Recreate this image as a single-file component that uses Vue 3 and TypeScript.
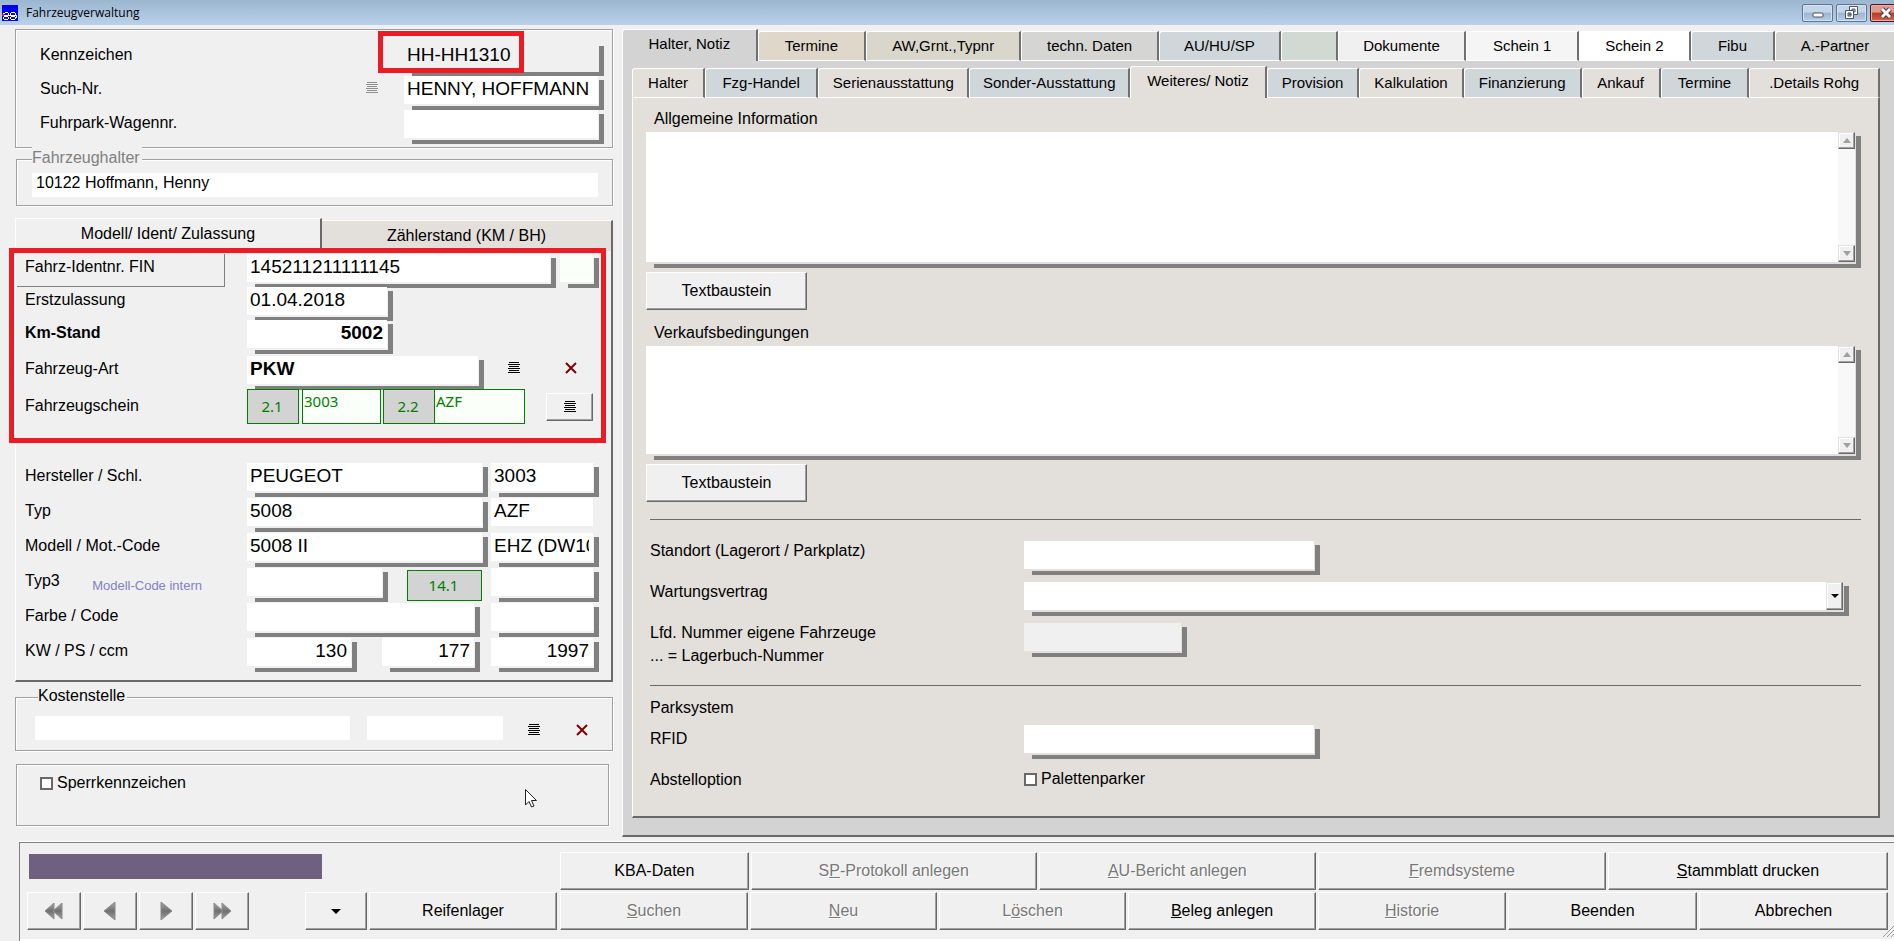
<script setup lang="ts">
import { reactive } from 'vue'

interface Tab {
  label: string
  span: number
  tone: string
  active?: boolean
}

interface Action {
  before?: string
  key?: string
  after: string
  span: number
  disabled?: boolean
}

const mainTabs: Tab[] = [
  { label: 'Halter, Notiz', span: 136, tone: 'grey', active: true },
  { label: 'Termine', span: 108, tone: 'tan' },
  { label: 'AW,Grnt.,Typnr', span: 156, tone: 'olive' },
  { label: 'techn. Daten', span: 138, tone: 'stone' },
  { label: 'AU/HU/SP', span: 122, tone: 'blue' },
  { label: '', span: 55, tone: 'green' },
  { label: 'Dokumente', span: 129, tone: 'light' },
  { label: 'Schein 1', span: 112, tone: 'pale' },
  { label: 'Schein 2', span: 112, tone: 'white' },
  { label: 'Fibu', span: 83, tone: 'blue' },
  { label: 'A.-Partner', span: 121, tone: 'stone' },
]

const subTabs: Tab[] = [
  { label: 'Halter', span: 72, tone: 'sand' },
  { label: 'Fzg-Handel', span: 113, tone: 'blue' },
  { label: 'Serienausstattung', span: 152, tone: 'sand' },
  { label: 'Sonder-Ausstattung', span: 162, tone: 'blue' },
  { label: 'Weiteres/ Notiz', span: 137, tone: 'sand', active: true },
  { label: 'Provision', span: 92, tone: 'blue' },
  { label: 'Kalkulation', span: 104, tone: 'sand' },
  { label: 'Finanzierung', span: 118, tone: 'blue' },
  { label: 'Ankauf', span: 78, tone: 'sand' },
  { label: 'Termine', span: 88, tone: 'blue' },
  { label: '.Details Rohg', span: 131, tone: 'sand' },
]

const topActions: Action[] = [
  { after: 'KBA-Daten', span: 188 },
  { before: 'S', key: 'P', after: '-Protokoll anlegen', span: 286, disabled: true },
  { key: 'A', after: 'U-Bericht anlegen', span: 277, disabled: true },
  { key: 'F', after: 'remdsysteme', span: 288, disabled: true },
  { key: 'S', after: 'tammblatt drucken', span: 280 },
]

const bottomActions: Action[] = [
  { key: 'S', after: 'uchen', span: 188, disabled: true },
  { key: 'N', after: 'eu', span: 187, disabled: true },
  { before: 'L', key: 'ö', after: 'schen', span: 187, disabled: true },
  { key: 'B', after: 'eleg anlegen', span: 188 },
  { key: 'H', after: 'istorie', span: 188, disabled: true },
  { after: 'Beenden', span: 189 },
  { after: 'Abbrechen', span: 189 },
]

const nav = [
  { name: 'Erster Datensatz', shape: 'M9 2 L9 18 L0 10Z M17 2 L17 18 L8 10Z' },
  { name: 'Voriger Datensatz', shape: 'M14 1 L14 19 L3 10Z' },
  { name: 'Nächster Datensatz', shape: 'M4 1 L4 19 L15 10Z' },
  { name: 'Letzter Datensatz', shape: 'M1 2 L1 18 L10 10Z M9 2 L9 18 L18 10Z' },
]

const car = reactive({
  kennzeichen: 'HH-HH1310',
  suchNr: 'HENNY, HOFFMANN',
  wagenNr: '',
  halter: '10122 Hoffmann, Henny',
  fin: '145211211111145',
  finZusatz: '',
  erstzulassung: '01.04.2018',
  km: '5002',
  art: 'PKW',
  feld21: '3003',
  feld22: 'AZF',
  hersteller: 'PEUGEOT',
  herstellerSchl: '3003',
  typ: '5008',
  typSchl: 'AZF',
  modell: '5008 II',
  motCode: 'EHZ (DW10',
  typ3: '',
  typ3Code: '',
  farbe: '',
  farbCode: '',
  kw: '130',
  ps: '177',
  ccm: '1997',
  kosten: '',
  kostenText: '',
  gesperrt: false,
  info: '',
  bedingungen: '',
  standort: '',
  wartung: '',
  lfdNummer: '',
  rfid: '',
  palette: false,
})
</script>

<template>
  <div class="window">
    <header class="titlebar">
      <svg class="app-icon" viewBox="0 0 16 16" width="16" height="16" shape-rendering="crispEdges" aria-hidden="true">
        <rect width="16" height="16" fill="#0000f8" />
        <path d="M3 7h3v1H3zM6 8h1v2H6zM1 8h2v1H1zM9 7h4v1H9zM13 8h1v2h-1zM8 8h1v2H8zM2 10h13v1H2zM14 11h1v2h-1z" fill="#fff" />
        <path d="M2 11h4v1H2zM1 12h1v2H1zM6 12h1v2H6zM2 14h4v1H2zM9 11h4v1H9zM8 12h1v2H8zM13 12h1v2h-1zM9 14h4v1H9z" fill="#fff" />
        <path d="M2 12h4v2H2zM9 12h4v2H9z" fill="#223" />
        <path d="M0 9h2v2H0z" fill="#f01818" />
      </svg>
      <span class="title">Fahrzeugverwaltung</span>
      <div class="win-buttons">
        <button class="win-btn" type="button" aria-label="Minimieren">
          <svg viewBox="0 0 12 12" width="12" height="12"><rect x="1" y="6" width="10" height="4" rx="1" fill="#fff" stroke="#49566b" /></svg>
        </button>
        <button class="win-btn" type="button" aria-label="Wiederherstellen">
          <svg viewBox="0 0 13 13" width="13" height="13">
            <path d="M4.500 .5h8v8h-8z M7 3h3v3h-3z" fill="#fff" fill-rule="evenodd" stroke="#49566b" />
            <path d="M.5 4.500h8v8h-8z M3 7h3v3h-3z" fill="#fff" fill-rule="evenodd" stroke="#49566b" />
          </svg>
        </button>
        <button class="win-btn close" type="button" aria-label="Schließen">
          <svg viewBox="0 0 12 12" width="12" height="12">
            <path d="M2 2 L10 10 M10 2 L2 10" stroke="#4b3a48" stroke-width="5" />
            <path d="M2 2 L10 10 M10 2 L2 10" stroke="#fff" stroke-width="3" />
          </svg>
        </button>
      </div>
    </header>

    <main class="main">
      <section class="left">
        <div class="box head-box">
          <div class="row">
            <label for="kennz">Kennzeichen</label>
            <span class="field plain w-head"><input id="kennz" v-model="car.kennzeichen" type="text" /></span>
          </div>
          <div class="row">
            <label for="such">Such-Nr.</label>
            <button class="flat dim" type="button" aria-label="Suchliste">
              <svg viewBox="0 0 12 12" width="12" height="12" shape-rendering="crispEdges"><path d="M1 0h10v1H1zM0 2h12v1H0zM1 4h10v1H1zM0 6h12v1H0zM1 8h10v1H1zM0 10h12v1H0z" fill="currentColor" /></svg>
            </button>
            <span class="field w-head"><input id="such" v-model="car.suchNr" type="text" /></span>
          </div>
          <div class="row">
            <label for="wagen">Fuhrpark-Wagennr.</label>
            <span class="field w-head"><input id="wagen" v-model="car.wagenNr" type="text" /></span>
          </div>
          <div class="mark mark-plate"></div>
        </div>

        <fieldset class="box holder">
          <legend>Fahrzeughalter</legend>
          <input v-model="car.halter" class="bare" type="text" aria-label="Fahrzeughalter" />
        </fieldset>

        <div class="model">
          <div class="model-tabs" role="tablist">
            <button class="model-tab current" type="button" role="tab" aria-selected="true">Modell/ Ident/ Zulassung</button>
            <button class="model-tab" type="button" role="tab" aria-selected="false">Zählerstand (KM / BH)</button>
          </div>
          <div class="model-panel">
            <div class="row short">
              <label class="boxed" for="fin">Fahrz-Identnr. FIN</label>
              <span class="field w-fin"><input id="fin" v-model="car.fin" type="text" /></span>
              <span class="field mint w-tiny last"><input v-model="car.finZusatz" type="text" aria-label="FIN Prüfziffer" /></span>
            </div>
            <div class="row short">
              <label for="erst">Erstzulassung</label>
              <span class="field w-date"><input id="erst" v-model="car.erstzulassung" type="text" /></span>
            </div>
            <div class="row tall">
              <label class="strong" for="km">Km-Stand</label>
              <span class="field w-date strong num"><input id="km" v-model="car.km" type="text" /></span>
            </div>
            <div class="row short">
              <label for="art">Fahrzeug-Art</label>
              <span class="field w-art strong"><input id="art" v-model="car.art" type="text" /></span>
              <div class="tools">
                <button class="flat" type="button" aria-label="Auswahlliste">
                  <svg viewBox="0 0 12 12" width="12" height="12" shape-rendering="crispEdges"><path d="M1 0h10v1H1zM0 2h12v1H0zM1 4h10v1H1zM0 6h12v1H0zM1 8h10v1H1zM0 10h12v1H0z" fill="currentColor" /></svg>
                </button>
                <button class="flat wine" type="button" aria-label="Löschen">
                  <svg viewBox="0 0 12 12" width="12" height="12"><path d="M1 1 L11 11 M11 1 L1 11" stroke="currentColor" stroke-width="2" fill="none" /></svg>
                </button>
              </div>
            </div>
            <div class="row schein">
              <label for="f21">Fahrzeugschein</label>
              <div class="codes">
                <span class="code">2.1</span>
                <input id="f21" v-model="car.feld21" class="code-in" type="text" />
                <span class="code joined">2.2</span>
                <input v-model="car.feld22" class="code-in wide" type="text" aria-label="Feld 2.2" />
              </div>
              <button class="raised list-btn last" type="button" aria-label="Fahrzeugschein-Liste">
                <svg viewBox="0 0 12 12" width="12" height="12" shape-rendering="crispEdges"><path d="M1 0h10v1H1zM0 2h12v1H0zM1 4h10v1H1zM0 6h12v1H0zM1 8h10v1H1zM0 10h12v1H0z" fill="currentColor" /></svg>
              </button>
            </div>
            <div class="mark mark-ident"></div>

            <div class="lower">
              <div class="row">
                <label for="herst">Hersteller / Schl.</label>
                <span class="field w-wide"><input id="herst" v-model="car.hersteller" type="text" /></span>
                <span class="field w-code last"><input v-model="car.herstellerSchl" type="text" aria-label="Herstellerschlüssel" /></span>
              </div>
              <div class="row">
                <label for="typ">Typ</label>
                <span class="field w-wide"><input id="typ" v-model="car.typ" type="text" /></span>
                <span class="field shadowless w-code last"><input v-model="car.typSchl" type="text" aria-label="Typschlüssel" /></span>
              </div>
              <div class="row">
                <label for="modell">Modell / Mot.-Code</label>
                <span class="field w-wide"><input id="modell" v-model="car.modell" type="text" /></span>
                <span class="field w-code last"><input v-model="car.motCode" type="text" aria-label="Motorcode" /></span>
              </div>
              <div class="row">
                <label for="typ3">Typ3 <small>Modell-Code intern</small></label>
                <span class="field w-typ3"><input id="typ3" v-model="car.typ3" type="text" /></span>
                <span class="code solo">14.1</span>
                <span class="field w-code last"><input v-model="car.typ3Code" type="text" aria-label="Typ3-Code" /></span>
              </div>
              <div class="row">
                <label for="farbe">Farbe / Code</label>
                <span class="field w-farbe"><input id="farbe" v-model="car.farbe" type="text" /></span>
                <span class="field w-code last"><input v-model="car.farbCode" type="text" aria-label="Farbcode" /></span>
              </div>
              <div class="row">
                <label for="kw">KW / PS / ccm</label>
                <span class="field num w-kw"><input id="kw" v-model="car.kw" type="text" /></span>
                <span class="field num w-ps last"><input v-model="car.ps" type="text" aria-label="PS" /></span>
                <span class="field num w-code after-ps"><input v-model="car.ccm" type="text" aria-label="ccm" /></span>
              </div>
            </div>
          </div>
        </div>

        <fieldset class="box cost">
          <legend>Kostenstelle</legend>
          <input v-model="car.kosten" class="bare cost-a" type="text" aria-label="Kostenstelle" />
          <input v-model="car.kostenText" class="bare cost-b" type="text" aria-label="Kostenstelle Text" />
          <div class="tools">
            <button class="flat" type="button" aria-label="Kostenstellenliste">
              <svg viewBox="0 0 12 12" width="12" height="12" shape-rendering="crispEdges"><path d="M1 0h10v1H1zM0 2h12v1H0zM1 4h10v1H1zM0 6h12v1H0zM1 8h10v1H1zM0 10h12v1H0z" fill="currentColor" /></svg>
            </button>
            <button class="flat wine" type="button" aria-label="Kostenstelle löschen">
              <svg viewBox="0 0 12 12" width="12" height="12"><path d="M1 1 L11 11 M11 1 L1 11" stroke="currentColor" stroke-width="2" fill="none" /></svg>
            </button>
          </div>
        </fieldset>

        <div class="box lock">
          <label class="check"><input v-model="car.gesperrt" type="checkbox" />Sperrkennzeichen</label>
          <svg class="pointer" viewBox="0 0 12 19" width="12" height="19" aria-hidden="true">
            <path d="M.5 .5V16L4 12.500L6.500 18L9 17L6.500 11.500H11.500Z" fill="#fff" stroke="#222" />
          </svg>
        </div>
      </section>

      <section class="right">
        <div class="tabs main-tabs" role="tablist">
          <button
            v-for="(t, i) in mainTabs"
            :key="i"
            class="tab"
            :class="[t.tone, { active: t.active }]"
            :style="{ flexGrow: t.span }"
            type="button"
            role="tab"
            :aria-selected="!!t.active"
          >{{ t.label }}</button>
        </div>
        <div class="outer-panel">
          <div class="tabs" role="tablist">
            <button
              v-for="(t, i) in subTabs"
              :key="i"
              class="tab"
              :class="[t.tone, { active: t.active }]"
              :style="{ flexGrow: t.span }"
              type="button"
              role="tab"
              :aria-selected="!!t.active"
            >{{ t.label }}</button>
          </div>
          <div class="inner-panel">
            <label class="area-label" for="info">Allgemeine Information</label>
            <div class="field area">
              <textarea id="info" v-model="car.info" class="tall-area"></textarea>
              <div class="scroll">
                <button type="button" aria-label="Nach oben"><svg viewBox="0 0 8 5" width="8" height="5"><path d="M0 5L4 0L8 5Z" fill="#a0a0a0" /></svg></button>
                <button type="button" aria-label="Nach unten"><svg viewBox="0 0 8 5" width="8" height="5"><path d="M0 0L4 5L8 0Z" fill="#a0a0a0" /></svg></button>
              </div>
            </div>
            <button class="raised text-btn" type="button">Textbaustein</button>
            <label class="area-label" for="beding">Verkaufsbedingungen</label>
            <div class="field area">
              <textarea id="beding" v-model="car.bedingungen" class="short-area"></textarea>
              <div class="scroll">
                <button type="button" aria-label="Nach oben"><svg viewBox="0 0 8 5" width="8" height="5"><path d="M0 5L4 0L8 5Z" fill="#a0a0a0" /></svg></button>
                <button type="button" aria-label="Nach unten"><svg viewBox="0 0 8 5" width="8" height="5"><path d="M0 0L4 5L8 0Z" fill="#a0a0a0" /></svg></button>
              </div>
            </div>
            <button class="raised text-btn" type="button">Textbaustein</button>
            <div class="group">
              <div class="line">
                <label for="standort">Standort (Lagerort / Parkplatz)</label>
                <span class="field w-std"><input id="standort" v-model="car.standort" type="text" /></span>
              </div>
              <div class="line">
                <label for="wartung">Wartungsvertrag</label>
                <span class="field pick">
                  <select id="wartung" v-model="car.wartung"><option value=""></option></select>
                  <span class="drop"><svg viewBox="0 0 8 4" width="8" height="4"><path d="M0 0H8L4 4Z" /></svg></span>
                </span>
              </div>
              <div class="line">
                <label for="lfd">Lfd. Nummer eigene Fahrzeuge<br />... = Lagerbuch-Nummer</label>
                <span class="field plain w-lfd"><input id="lfd" v-model="car.lfdNummer" type="text" /></span>
              </div>
            </div>
            <div class="group park">
              <div class="line-head">Parksystem</div>
              <div class="line">
                <label for="rfid">RFID</label>
                <span class="field w-std"><input id="rfid" v-model="car.rfid" type="text" /></span>
              </div>
              <div class="line">
                <span class="caption">Abstelloption</span>
                <label class="check"><input v-model="car.palette" type="checkbox" />Palettenparker</label>
              </div>
            </div>
          </div>
        </div>
      </section>
    </main>

    <footer class="footer">
      <div class="foot-left">
        <div class="status"></div>
        <div class="foot-row">
          <button v-for="n in nav" :key="n.name" class="raised nav-btn" type="button" :aria-label="n.name">
            <svg viewBox="0 0 18 20" width="18" height="20">
              <defs><linearGradient id="metal" x1="0" y1="0" x2="0" y2="1"><stop offset="0" stop-color="#a8a8a8" /><stop offset="0.5" stop-color="#707070" /><stop offset="1" stop-color="#a0a0a0" /></linearGradient></defs>
              <path :d="n.shape" fill="url(#metal)" stroke="#8a8a8a" stroke-width="1" />
            </svg>
          </button>
          <button class="raised drop-btn" type="button" aria-label="Auswahl">
            <svg viewBox="0 0 10 5" width="10" height="5"><path d="M0 0H10L5 5Z" /></svg>
          </button>
          <button class="raised store-btn" type="button">Reifenlager</button>
        </div>
      </div>
      <div class="foot-right">
        <div class="foot-row">
          <button
            v-for="a in topActions"
            :key="a.after"
            class="raised action"
            :style="{ flexGrow: a.span }"
            :disabled="a.disabled"
            type="button"
          >{{ a.before }}<u v-if="a.key">{{ a.key }}</u>{{ a.after }}</button>
        </div>
        <div class="foot-row">
          <button
            v-for="a in bottomActions"
            :key="a.after"
            class="raised action"
            :style="{ flexGrow: a.span }"
            :disabled="a.disabled"
            type="button"
          >{{ a.before }}<u v-if="a.key">{{ a.key }}</u>{{ a.after }}</button>
        </div>
      </div>
      <svg class="grip" viewBox="0 0 12 12" width="12" height="12" aria-hidden="true"><path d="M1 12L12 1M5 12L12 5M9 12L12 9" stroke="#a0a0a0" stroke-width="1" /></svg>
    </footer>
  </div>
</template>

<style>
body {
  margin: 0;
  background: #f0f0f0;
}
</style>

<style scoped>
.window,
.window * {
  box-sizing: border-box;
}

.window {
  display: flex;
  flex-direction: column;
  min-height: 100vh;
  overflow: hidden;
  background: #f0f0f0;
  color: #000;
  font: 16px/26px "Liberation Sans", Arial, sans-serif;
}

button,
input,
select,
textarea {
  margin: 0;
  padding: 0;
  border: 0;
  border-radius: 0;
  outline: 0;
  background: transparent;
  color: inherit;
  font: inherit;
}

button {
  display: flex;
  align-items: center;
  justify-content: center;
}

/* title bar */
.titlebar {
  display: flex;
  align-items: center;
  height: 25px;
  padding-left: 2px;
  background: linear-gradient(#9cb6d0, #b9d1ea);
}

.title {
  margin-left: 8px;
  font: 12px/24px "Open Sans", "Noto Sans", sans-serif;
}

.win-buttons {
  display: flex;
  gap: 3px;
  margin: 0 -7px 0 auto;
}

.win-btn {
  width: 31px;
  height: 18px;
  border: 1px solid #5d7391;
  border-radius: 2px;
  background: linear-gradient(#c3d5e9 45%, #9bb4d0 50%, #b5cde6);
  box-shadow: inset 0 0 0 1px #d5e2f0;
}

.close {
  border-color: #4a1820;
  background: linear-gradient(#e09a8e 45%, #b83a20 50%, #d2664f);
  box-shadow: inset 0 0 0 1px #e8b0a5;
}

.main {
  display: flex;
  flex: 1;
}

/* left column */
.left {
  display: flex;
  flex: none;
  flex-direction: column;
  width: 622px;
  padding: 4px 9px 16px 15px;
}

.box {
  margin: 0;
  border: 1px solid #a0a0a0;
  box-shadow: inset 1px 1px 0 #fff, 1px 1px 0 #fff;
}

.row {
  display: flex;
  align-items: flex-start;
  height: 35px;
}

.row > label {
  flex: none;
  width: 222px;
}

.head-box {
  position: relative;
  height: 119px;
  padding: 12px 8px 0 24px;
}

.head-box .row {
  height: 34px;
}

.head-box .row > label {
  margin-right: auto;
}

.field {
  display: flex;
  flex: none;
  height: 34px;
  padding: 0 6px 6px 0;
  background:
    linear-gradient(#808080, #808080) right bottom / calc(100% - 8px) 4px no-repeat,
    linear-gradient(#808080, #808080) right bottom / 5px calc(100% - 4px) no-repeat;
}

.field input {
  width: 100%;
  height: 28px;
  padding: 0 4px 2px 3px;
  background: #fff;
  font-size: 19px;
}

.field.plain input {
  background: #f0f0f0;
}

.field.mint input {
  background: #fafffa;
}

.shadowless {
  background: none;
}

.num input {
  text-align: right;
}

.strong {
  font-weight: bold;
}

.w-head { width: 200px; }
.w-fin { width: 309px; }
.w-tiny { width: 39px; }
.w-date { width: 146px; }
.w-art { width: 237px; }
.w-wide { width: 241px; }
.w-code { width: 108px; }
.w-typ3 { width: 141px; }
.w-farbe { width: 233px; }
.w-kw { width: 110px; }
.w-ps { width: 98px; }
.w-std { width: 296px; }
.w-lfd { width: 163px; }

.last {
  margin-left: auto;
}

.after-ps {
  margin-left: 11px;
}

.flat {
  width: 24px;
  height: 24px;
}

.dim {
  margin-right: 20px;
  color: #909090;
}

.wine {
  color: #800000;
}

.mark {
  position: absolute;
  border: 5px solid #ed1c24;
  pointer-events: none;
}

.mark-plate {
  top: 1px;
  left: 362px;
  width: 146px;
  height: 42px;
}

.mark-ident {
  top: -3px;
  right: 5px;
  left: -7px;
  height: 195px;
}

.holder,
.cost {
  display: flex;
  position: relative;
}

.box legend {
  position: absolute;
  top: -15px;
  padding: 0 2px 0 0;
  background: #f0f0f0;
}

.holder {
  height: 47px;
  margin: 11px 0 12px 1px;
  padding: 13px 14px 0 15px;
}

.holder legend {
  left: 15px;
  color: #808080;
}

.bare {
  height: 24px;
  padding: 0 0 4px 4px;
  background: #fff;
}

.holder .bare {
  width: 100%;
}

.model-tabs {
  display: flex;
  align-items: flex-end;
}

.model-tab {
  flex: 292;
  height: 31px;
  border-top: 1px solid #fff;
  border-right: 2px solid #696969;
  background: #e3dfda;
}

.current {
  flex: 307;
  height: 33px;
  padding-bottom: 2px;
  border-left: 1px solid #fff;
  background: none;
}

.model-panel {
  position: relative;
  height: 431px;
  padding: 3px 12px 0 9px;
  border: solid #fff;
  border-width: 0 2px 2px 1px;
  border-right-color: #696969;
  border-bottom-color: #696969;
}

.row.short {
  height: 33px;
}

.row.tall {
  height: 36px;
}

.row > .boxed {
  height: 33px;
  width: 208px;
  margin: 0 22px 0 -8px;
  padding-left: 8px;
  border: solid #808080;
  border-width: 0 1px 1px 0;
}

.lower {
  padding-top: 39px;
}

.tools {
  display: flex;
  gap: 33px;
  align-items: center;
  margin-left: auto;
}

.row .tools {
  margin-right: 16px;
}

.schein > label {
  padding-top: 4px;
}

.codes {
  display: flex;
  color: #008000;
  font: 15px/24px "Noto Sans", sans-serif;
}

.code {
  width: 52px;
  height: 35px;
  padding-right: 2px;
  border: 1px solid #008000;
  background: #d3d3d3;
  line-height: 32px;
  text-align: center;
}

.joined {
  margin-right: -1px;
}

.code-in {
  width: 79px;
  height: 35px;
  margin: 0 2px 0 3px;
  padding: 0 1px 12px;
  border: 1px solid #008000;
  background: #fafffa;
}

.wide {
  width: 91px;
  margin: 0;
}

.solo {
  width: 75px;
  height: 31px;
  margin: 2px 0 0 19px;
  color: #008000;
  font: 15px/28px "Noto Sans", sans-serif;
}

.raised {
  border: 1px solid #fff;
  border-right-color: #696969;
  border-bottom-color: #696969;
  box-shadow: inset -1px -1px 0 #a0a0a0;
  background: #f0f0f0;
}

.list-btn {
  width: 47px;
  height: 28px;
  margin-top: 4px;
  margin-right: 6px;
}

small {
  margin-left: 28px;
  color: #8080c8;
  font-size: 13px;
  vertical-align: -4px;
}

.cost {
  height: 54px;
  margin-top: 15px;
  padding: 18px 14px 0 19px;
}

.cost legend {
  left: 22px;
}

.cost-a {
  width: 315px;
}

.cost-b {
  width: 136px;
  margin-left: 17px;
}

.cost .tools {
  height: 28px;
  gap: 24px;
  margin-right: 4px;
}

.lock {
  display: flex;
  position: relative;
  height: 62px;
  margin: 13px 4px 0 1px;
  padding: 5px 23px;
}

.check {
  display: flex;
  gap: 4px;
  align-items: center;
  height: 26px;
}

.check input {
  appearance: none;
  width: 13px;
  height: 13px;
  border: 2px solid #696969;
  background: #fff;
}

.pointer {
  position: absolute;
  top: 24px;
  left: 508px;
}

/* right column */
.right {
  display: flex;
  flex: 1;
  flex-direction: column;
  min-width: 0;
  padding: 4px 0 5px;
}

.tabs {
  display: flex;
  align-items: flex-end;
}

.tab {
  flex: 1 1 0;
  min-width: 0;
  height: 30px;
  border: solid #fff;
  border-width: 1px 2px 1px 1px;
  border-right-color: #707070;
  border-top-left-radius: 3px;
  font-size: 15px;
  white-space: nowrap;
}

.main-tabs .tab:last-child {
  border-right: 0;
}

.tab.active {
  height: 32px;
  padding-bottom: 4px;
  border-bottom: 0;
}

.grey { background: #d3d3d3; }
.tan { background: #dfd7ca; }
.olive { background: #d9d7cc; }
.stone { background: #d5d5d3; }
.blue { background: #d0d7da; }
.green { background: #d0dad2; }
.light { background: #f0f0f0; }
.pale { background: #f5f5f5; }
.white { background: #fff; }
.sand { background: #e3dfda; }

.outer-panel {
  display: flex;
  flex: 1;
  flex-direction: column;
  padding: 5px 14px 17px 9px;
  border-bottom: 2px solid #696969;
  border-left: 1px solid #fff;
  background: #d3d3d3;
}

.inner-panel {
  display: flex;
  flex: 1;
  flex-direction: column;
  align-items: flex-start;
  padding: 8px 17px 0 13px;
  border: solid #fff;
  border-width: 0 2px 2px 1px;
  border-right-color: #696969;
  border-bottom-color: #696969;
  background: #e3dfda;
}

.area-label {
  margin-left: 8px;
}

.area {
  align-self: stretch;
  height: auto;
}

.area textarea {
  flex: 1;
  height: 130px;
  background: #fff;
  resize: none;
}

.area .short-area {
  height: 108px;
}

.scroll {
  display: flex;
  flex-direction: column;
  justify-content: space-between;
  width: 17px;
  background: #f8f8f8;
}

.scroll button,
.drop {
  display: flex;
  align-items: center;
  justify-content: center;
  height: 17px;
  border: 1px solid #e3e3e3;
  border-right-color: #696969;
  border-bottom-color: #696969;
  box-shadow: inset -1px -1px 0 #a0a0a0, inset 1px 1px 0 #fff;
  background: #f0f0f0;
}

.text-btn {
  width: 161px;
  height: 38px;
  margin: 4px 0 10px;
}

.group {
  align-self: stretch;
  margin: 7px 0 0 4px;
  padding-top: 21px;
  border-top: 1px solid #696969;
}

.line {
  display: flex;
  align-items: flex-start;
  min-height: 41px;
  padding-right: 12px;
}

.line > label:first-child,
.caption {
  flex: none;
  width: 374px;
  margin-top: -2px;
  line-height: 23px;
}

.pick {
  position: relative;
  flex: 1;
}

.pick select {
  appearance: none;
  width: 100%;
  height: 28px;
  background: #fff;
}

.drop {
  position: absolute;
  top: 0;
  right: 6px;
  width: 17px;
  height: 28px;
  pointer-events: none;
}

.group.park {
  margin-top: 18px;
  padding-top: 9px;
}

.park .line > label:first-child,
.park .caption {
  margin-top: 2px;
}

.line-head {
  height: 30px;
}

/* footer */
.footer {
  display: flex;
  position: relative;
  height: 99px;
  margin-left: 19px;
  padding: 9px 6px 0 7px;
  border-top: 1px solid #808080;
  border-left: 1px solid #808080;
  box-shadow: inset 0 -2px 0 #fff, 0 -1px 0 #fff;
}

.foot-left {
  width: 533px;
}

.status {
  width: 293px;
  height: 25px;
  margin: 2px 0 13px 2px;
  background: #6f6080;
}

.foot-row {
  display: flex;
  gap: 2px;
}

.foot-right {
  display: flex;
  flex: 1;
  flex-direction: column;
  gap: 2px;
}

.raised.nav-btn,
.drop-btn,
.store-btn,
.action {
  height: 38px;
}

.nav-btn {
  width: 54px;
}

.drop-btn {
  width: 62px;
  margin-left: 54px;
}

.store-btn {
  width: 188px;
}

.action {
  flex: 1 1 0;
}

.action:disabled {
  color: #787878;
  text-shadow: 1px 1px 0 #fff;
}

.grip {
  position: absolute;
  right: 0;
  bottom: 4px;
}
</style>
